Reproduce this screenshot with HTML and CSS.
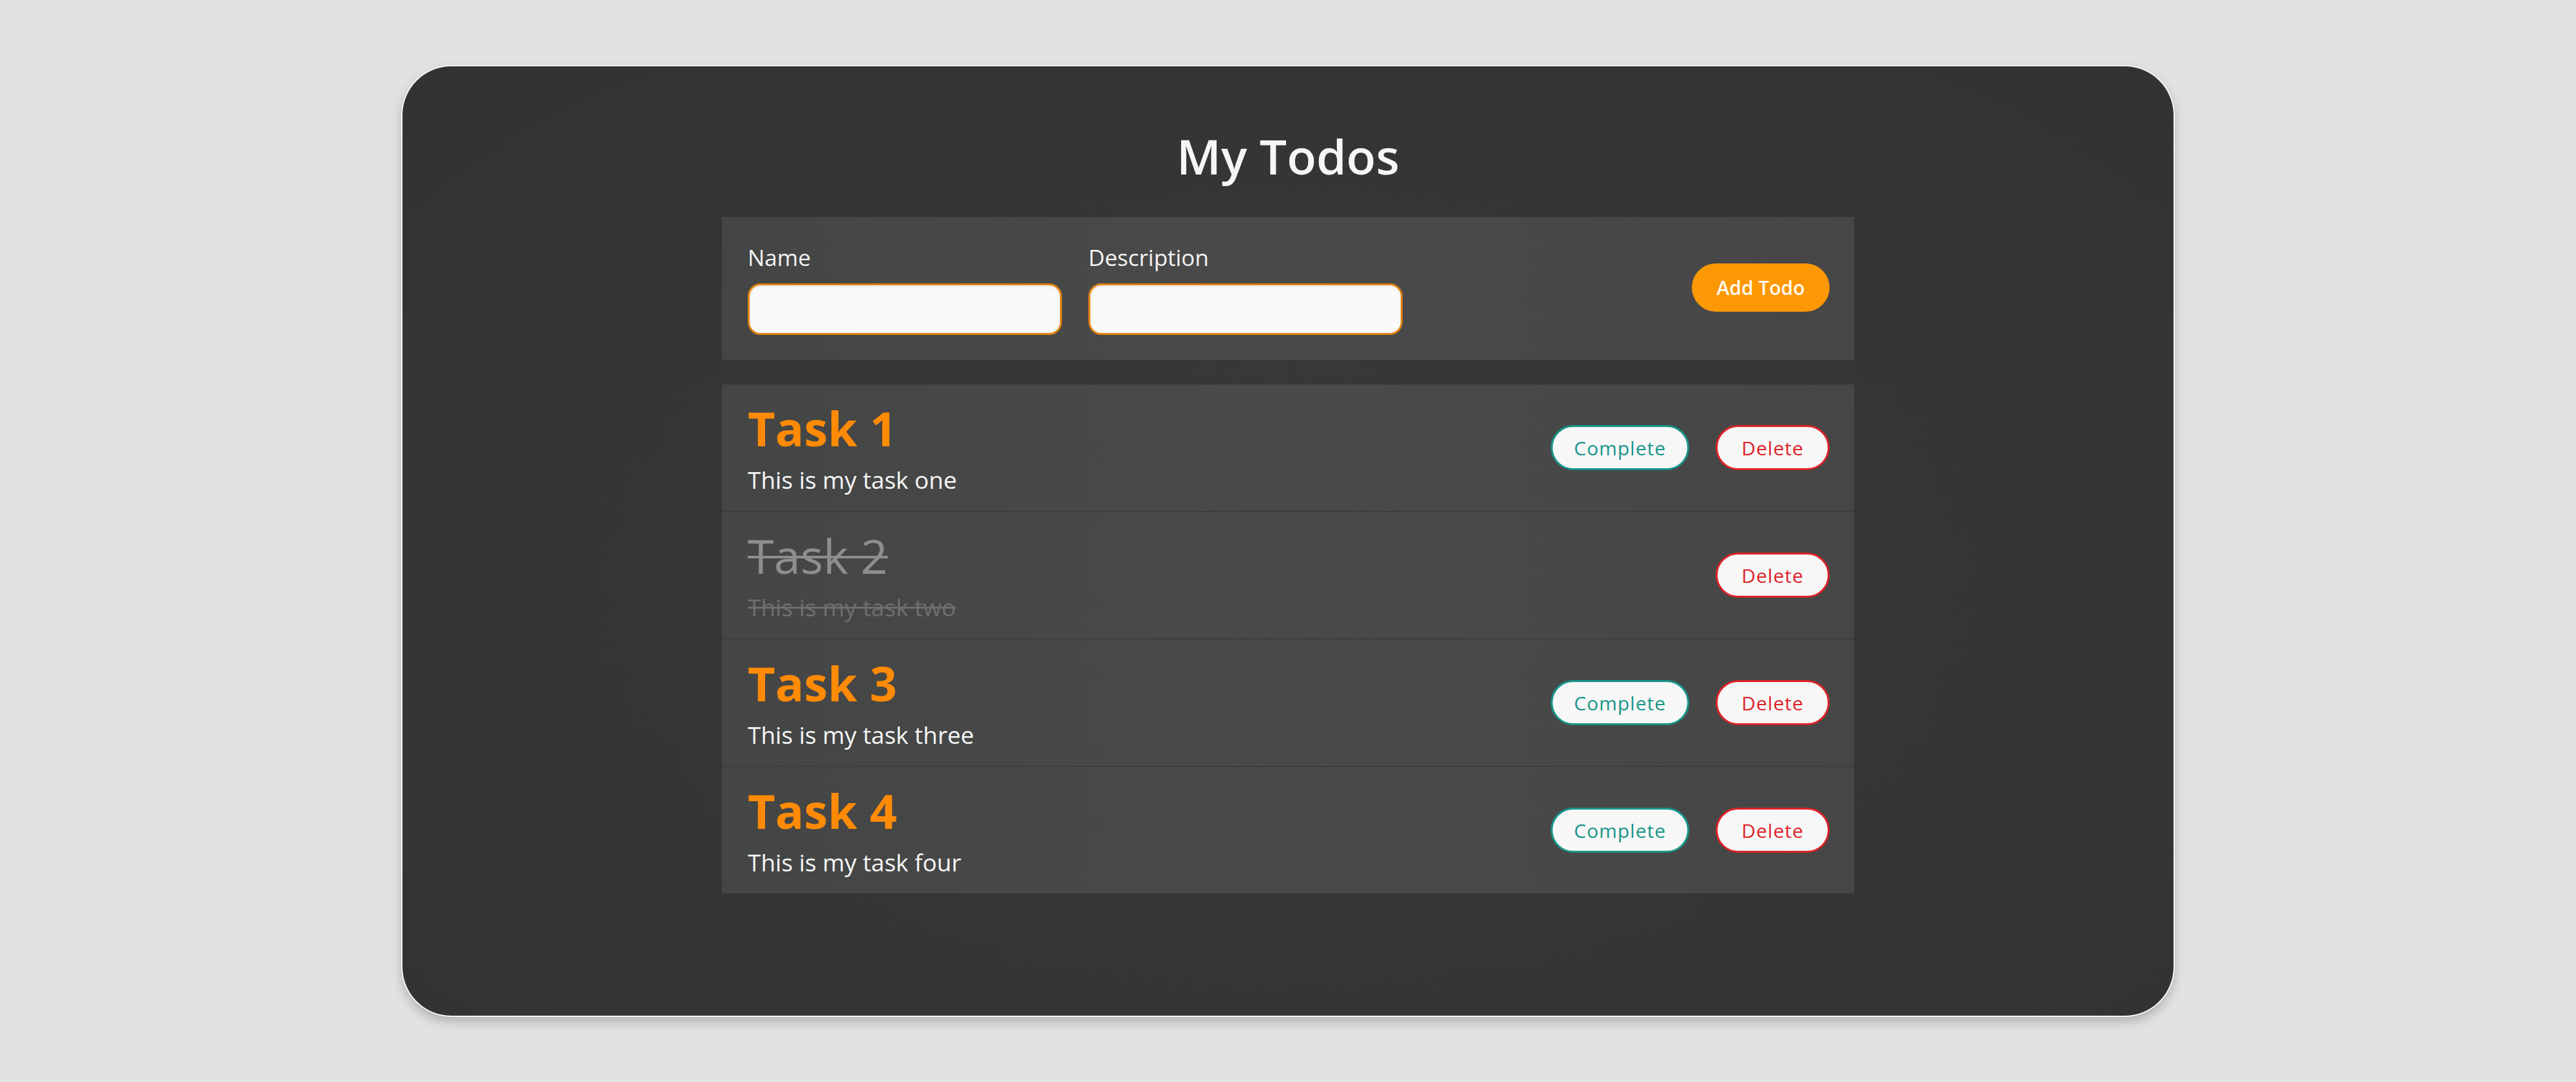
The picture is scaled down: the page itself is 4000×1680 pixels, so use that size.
FILE: index.html
```html
<!DOCTYPE html>
<html lang="en">
<head>
<meta charset="utf-8">
<title>My Todos</title>
<link rel="stylesheet" href="styles.css">
</head>
<body>
<main class="card">
  <h1 class="title">My Todos</h1>
  <div class="content">
    <form class="add-form">
      <div class="fields">
        <label class="field">
          <span class="field-label">Name</span>
          <input class="field-input" type="text">
        </label>
        <label class="field">
          <span class="field-label">Description</span>
          <input class="field-input" type="text">
        </label>
      </div>
      <button type="button" class="btn-add">Add Todo</button>
    </form>
    <ul class="todo-list">
      <li class="todo">
        <div class="todo-text">
          <h2 class="todo-name">Task 1</h2>
          <p class="todo-desc">This is my task one</p>
        </div>
        <div class="todo-actions">
          <button type="button" class="btn btn-complete">Complete</button>
          <button type="button" class="btn btn-delete">Delete</button>
        </div>
      </li>
      <li class="todo done">
        <div class="todo-text">
          <h2 class="todo-name">Task 2</h2>
          <p class="todo-desc">This is my task two</p>
        </div>
        <div class="todo-actions">
          <button type="button" class="btn btn-delete">Delete</button>
        </div>
      </li>
      <li class="todo">
        <div class="todo-text">
          <h2 class="todo-name">Task 3</h2>
          <p class="todo-desc">This is my task three</p>
        </div>
        <div class="todo-actions">
          <button type="button" class="btn btn-complete">Complete</button>
          <button type="button" class="btn btn-delete">Delete</button>
        </div>
      </li>
      <li class="todo">
        <div class="todo-text">
          <h2 class="todo-name">Task 4</h2>
          <p class="todo-desc">This is my task four</p>
        </div>
        <div class="todo-actions">
          <button type="button" class="btn btn-complete">Complete</button>
          <button type="button" class="btn btn-delete">Delete</button>
        </div>
      </li>
    </ul>
  </div>
</main>
</body>
</html>
```

FILE: styles.css
```css
* { box-sizing: border-box; }

html, body {
  margin: 0;
  padding: 0;
}

body {
  width: 4000px;
  height: 1680px;
  background: #e1e2e2;
  font-family: "Open Sans", "Noto Sans", sans-serif;
  display: flex;
  align-items: center;
  justify-content: center;
}

.card {
  width: 2750px;
  height: 1474px;
  border-radius: 76px;
  background: radial-gradient(ellipse at 50% 55%, #3b3b3b 0%, #363636 45%, #323232 100%);
  box-shadow: 0 0 0 2px #f4f4f4, 0 8px 18px rgba(0, 0, 0, 0.25);
  padding: 94px 0 0;
  display: flex;
  flex-direction: column;
  align-items: center;
}

.title {
  margin: 0;
  font-size: 75px;
  line-height: 90px;
  font-weight: 600;
  color: #f6f6f6;
}

.content {
  width: 1758px;
  margin-top: 50px;
}

.add-form {
  height: 222px;
  background: linear-gradient(90deg, #444545 0%, #4a4a4a 50%, #464646 100%);
  display: flex;
  align-items: center;
  justify-content: space-between;
  padding: 0 38px 0 40px;
}

.fields {
  display: flex;
  gap: 41px;
}

.field {
  display: flex;
  flex-direction: column;
  gap: 16px;
}

.field-label {
  font-size: 35px;
  line-height: 48px;
  font-weight: 500;
  color: #f4f4f4;
}

.field-input {
  width: 488px;
  height: 80px;
  border: 3px solid #e2830f;
  border-radius: 20px;
  background: #fafafa;
  box-shadow: inset 0 2px 4px rgba(0, 0, 0, 0.08);
  outline: none;
}

.btn-add {
  width: 214px;
  height: 75px;
  border: none;
  border-radius: 38px;
  background: #fd9805;
  color: #fff8ec;
  font-family: inherit;
  font-size: 30px;
  font-weight: 600;
  margin-top: -3px;
  padding: 0;
}

.todo-list {
  list-style: none;
  margin: 38px 0 0;
  padding: 0;
  background: linear-gradient(90deg, #444545 0%, #4a4a4a 50%, #464646 100%);
}

.todo {
  height: 198px;
  padding: 0 38px 0 40px;
  display: flex;
  align-items: center;
  justify-content: space-between;
  border-bottom: 2px solid #3d3d3d;
}

.todo:last-child {
  border-bottom: none;
  height: 196px;
}

.todo-text {
  display: flex;
  flex-direction: column;
  gap: 16px;
}

.todo-name {
  margin: 0;
  font-size: 74px;
  line-height: 84px;
  font-weight: 700;
  color: #ff8a05;
}

.todo-desc {
  margin: 0;
  font-size: 37px;
  line-height: 44px;
  font-weight: 500;
  color: #f5f5f5;
}

.done .todo-name {
  color: #8e8e8e;
  font-weight: 400;
  text-decoration: line-through;
  text-decoration-thickness: 4px;
}

.done .todo-desc {
  color: #6e6e6e;
  font-weight: 400;
  text-decoration: line-through;
}

.todo-actions {
  display: flex;
  gap: 41px;
}

.btn {
  height: 70px;
  border-radius: 35px;
  background: #f7f7f7;
  font-family: inherit;
  font-size: 30px;
  font-weight: 500;
  letter-spacing: 1px;
  padding: 0;
}

.btn-complete {
  width: 215px;
  border: 3px solid #17968a;
  color: #17968a;
}

.btn-delete {
  width: 177px;
  border: 3px solid #de2228;
  color: #de2228;
}
```
